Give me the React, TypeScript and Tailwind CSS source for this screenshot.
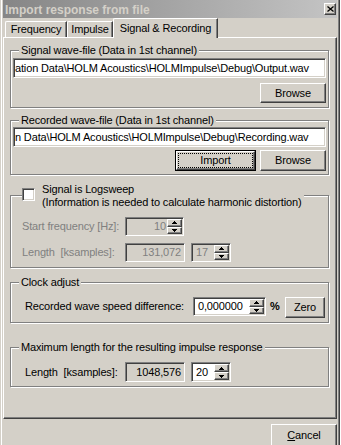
import React from 'react';

const raised =
  'border border-t-white border-l-white border-r-[#404040] border-b-[#404040] shadow-[inset_-1px_-1px_0_#808080]';
const sunken =
  'border border-t-[#808080] border-l-[#808080] border-r-white border-b-white shadow-[inset_1px_1px_0_#404040,inset_-1px_-1px_0_#d4d0c8]';

function Arrow({ up }: { up?: boolean }) {
  return (
    <div className={`flex-1 flex items-center justify-center bg-[#d4d0c8] ${raised}`}>
      <svg width="5" height="3" shapeRendering="crispEdges">
        <polygon points={up ? '2.5,0 5,3 0,3' : '0,0 5,0 2.5,3'} fill="#000" />
      </svg>
    </div>
  );
}

function Spin({
  value,
  className,
  disabled,
  left,
}: {
  value: string;
  className: string;
  disabled?: boolean;
  left?: boolean;
}) {
  return (
    <div
      className={`flex p-[1px] ${sunken} ${className} ${disabled ? 'bg-[#d4d0c8] text-[#808080]' : 'bg-white'}`}
    >
      <div className={`flex-1 flex items-center leading-[13px] ${left ? 'justify-start pl-[3px]' : 'justify-end pr-[1px]'}`}>
        {value}
      </div>
      <div className="w-[15px] flex flex-col">
        <Arrow up />
        <Arrow />
      </div>
    </div>
  );
}

function Button({ children, className }: { children: React.ReactNode; className: string }) {
  return (
    <div className={`flex items-center justify-center bg-[#d4d0c8] leading-[13px] ${raised} ${className}`}>
      {children}
    </div>
  );
}

function Group({
  title,
  className,
  children,
}: {
  title?: string;
  className: string;
  children: React.ReactNode;
}) {
  return (
    <div className={`relative w-[319px] border border-[#808080] shadow-[inset_1px_1px_0_#fff,1px_1px_0_#fff] ${className}`}>
      {title && (
        <span className="absolute -top-[7px] left-[8px] px-[2px] bg-[#d4d0c8] leading-[13px] whitespace-nowrap">
          {title}
        </span>
      )}
      {children}
    </div>
  );
}

function PathBox({ text }: { text: string }) {
  return (
    <div className={`w-[313px] h-[20px] bg-white flex items-center overflow-hidden whitespace-nowrap pl-[1px] leading-[13px] ${sunken}`}>
      {text}
    </div>
  );
}

export default function App() {
  return (
    <div className="w-[341px] h-[445px] overflow-hidden bg-white font-['Liberation_Sans',Arial,sans-serif] text-[11px] tracking-[-0.15px] text-black">
      <div className="w-[340px] h-[470px] bg-[#d4d0c8] px-[3px] shadow-[inset_1px_0_0_#d4d0c8,inset_2px_0_0_#fff,inset_-1px_0_0_#404040,inset_-2px_0_0_#808080]">
        {/* title bar (inactive) */}
        <div className="h-[18px] flex items-center justify-between bg-linear-to-r from-[#868686] to-[#c4c4c4] pl-[2px] pr-[1px]">
          <span className="text-[12px] font-bold tracking-normal text-[#d4d0c8] leading-[14px] pt-[1px]">
            Import response from file
          </span>
          <div className={`w-[12px] h-[12px] flex items-center justify-center bg-[#d4d0c8] ${raised}`}>
            <svg width="7" height="6">
              <path d="M0.5 0.5l6 5M6.5 0.5l-6 5" stroke="#000" strokeWidth="1.3" />
            </svg>
          </div>
        </div>

        {/* tabs */}
        <div className="h-[19px] flex items-end pl-[2px]">
          <div className="w-[62px] h-[16px] flex justify-center pt-[1px] leading-[13px] border-t border-l border-t-white border-l-white border-r border-r-[#404040] shadow-[inset_-1px_0_0_#808080] rounded-tl-[2px]">
            Frequency
          </div>
          <div className="w-[46px] h-[16px] flex justify-center pt-[1px] leading-[13px] border-t border-l border-t-white border-l-white border-r border-r-[#404040] shadow-[inset_-1px_0_0_#808080] rounded-tl-[2px]">
            Impulse
          </div>
          <div className="relative z-10 -mb-[1px] w-[105px] h-[20px] flex justify-center pt-[3px] leading-[13px] bg-[#d4d0c8] border-t border-l border-t-white border-l-white border-r border-r-[#404040] shadow-[inset_-1px_0_0_#808080] rounded-tl-[2px]">
            Signal &amp; Recording
          </div>
        </div>

        {/* tab page */}
        <div className="h-[382px] flex flex-col pl-[6px] bg-[#d4d0c8] border border-t-white border-l-white border-r-[#404040] border-b-[#404040] shadow-[inset_-1px_-1px_0_#808080]">
          <Group title="Signal wave-file (Data in 1st channel)" className="h-[58px] mt-[12px]">
            <div className="flex flex-col items-end gap-[5px] pt-[7px] px-[2px]">
              <PathBox text="ation Data\HOLM Acoustics\HOLMImpulse\Debug\Output.wav" />
              <Button className="w-[66px] h-[20px]">Browse</Button>
            </div>
          </Group>

          <Group title="Recorded wave-file (Data in 1st channel)" className="h-[55px] mt-[12px]">
            <div className="flex flex-col items-end gap-[3px] pt-[6px] px-[2px]">
              <PathBox text="n Data\HOLM Acoustics\HOLMImpulse\Debug\Recording.wav" />
              <div className="flex gap-[4px]">
                <div className="w-[81px] h-[21px] border border-black">
                  <div className={`h-full flex p-[1px] ${raised}`}>
                    <div className="flex-1 flex items-center justify-center leading-[13px] border border-dotted border-black">
                      Import
                    </div>
                  </div>
                </div>
                <Button className="w-[66px] h-[21px]">Browse</Button>
              </div>
            </div>
          </Group>

          <Group className="h-[73px] mt-[20px]">
            <div className="absolute -top-[13px] left-[11px] flex items-start bg-[#d4d0c8] pr-[3px]">
              <div className={`w-[13px] h-[13px] mt-[5px] bg-white ${sunken}`} />
              <div className="ml-[7px] leading-[13px]">
                <div>Signal is Logsweep</div>
                <div>(Information is needed to calculate harmonic distortion)</div>
              </div>
            </div>
            <div className="flex flex-col gap-[7px] pt-[21px] pl-[11px] text-[#808080]">
              <div className="flex items-center h-[19px]">
                <span className="w-[103px] leading-[13px]">Start frequency [Hz]:</span>
                <Spin value="10" className="w-[59px] h-[19px]" disabled />
              </div>
              <div className="flex items-center h-[19px]">
                <span className="w-[103px] leading-[13px] whitespace-pre">Length  [ksamples]:</span>
                <div className={`w-[60px] h-[19px] flex items-center justify-end pr-[3px] leading-[13px] ${sunken}`}>
                  131,072
                </div>
                <Spin value="17" className="w-[40px] h-[19px] ml-[6px]" disabled left />
              </div>
            </div>
          </Group>

          <Group title="Clock adjust" className="h-[41px] mt-[14px]">
            <div className="flex items-start pt-[14px] pl-[14px]">
              <span className="w-[168px] h-[19px] flex items-center leading-[13px]">
                Recorded wave speed difference:
              </span>
              <Spin value="0,000000" className="w-[73px] h-[19px]" left />
              <span className="w-[15px] h-[19px] ml-[4px] flex items-center font-bold leading-[13px]">%</span>
              <Button className="w-[40px] h-[21px]">Zero</Button>
            </div>
          </Group>

          <Group title="Maximum length for the resulting impulse response" className="h-[40px] mt-[24px]">
            <div className="flex items-center pt-[14px] pl-[14px]">
              <span className="w-[100px] leading-[13px] whitespace-pre">Length  [ksamples]:</span>
              <div className={`w-[60px] h-[20px] flex items-center justify-end pr-[3px] leading-[13px] ${sunken}`}>
                1048,576
              </div>
              <Spin value="20" className="w-[40px] h-[20px] ml-[6px]" left />
            </div>
          </Group>
        </div>

        <div className="flex justify-end mt-[5px]">
          <Button className="w-[66px] h-[23px]">
            <span>
              <span className="underline">C</span>ancel
            </span>
          </Button>
        </div>
      </div>
    </div>
  );
}
